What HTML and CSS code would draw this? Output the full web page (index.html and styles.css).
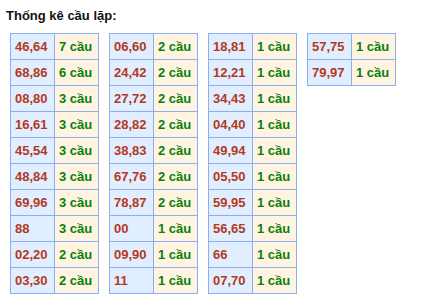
FILE: index.html
```html
<!DOCTYPE html>
<html>
<head>
<meta charset="utf-8">
<link rel="stylesheet" href="styles.css">
</head>
<body>
<div class="title">Thống kê cầu lặp:</div>
<div class="tables">
  <table class="stat">
    <tr><td class="num">46,64</td><td class="cau">7 cầu</td></tr>
    <tr><td class="num">68,86</td><td class="cau">6 cầu</td></tr>
    <tr><td class="num">08,80</td><td class="cau">3 cầu</td></tr>
    <tr><td class="num">16,61</td><td class="cau">3 cầu</td></tr>
    <tr><td class="num">45,54</td><td class="cau">3 cầu</td></tr>
    <tr><td class="num">48,84</td><td class="cau">3 cầu</td></tr>
    <tr><td class="num">69,96</td><td class="cau">3 cầu</td></tr>
    <tr><td class="num">88</td><td class="cau">3 cầu</td></tr>
    <tr><td class="num">02,20</td><td class="cau">2 cầu</td></tr>
    <tr><td class="num">03,30</td><td class="cau">2 cầu</td></tr>
  </table>
  <table class="stat">
    <tr><td class="num">06,60</td><td class="cau">2 cầu</td></tr>
    <tr><td class="num">24,42</td><td class="cau">2 cầu</td></tr>
    <tr><td class="num">27,72</td><td class="cau">2 cầu</td></tr>
    <tr><td class="num">28,82</td><td class="cau">2 cầu</td></tr>
    <tr><td class="num">38,83</td><td class="cau">2 cầu</td></tr>
    <tr><td class="num">67,76</td><td class="cau">2 cầu</td></tr>
    <tr><td class="num">78,87</td><td class="cau">2 cầu</td></tr>
    <tr><td class="num">00</td><td class="cau">1 cầu</td></tr>
    <tr><td class="num">09,90</td><td class="cau">1 cầu</td></tr>
    <tr><td class="num">11</td><td class="cau">1 cầu</td></tr>
  </table>
  <table class="stat">
    <tr><td class="num">18,81</td><td class="cau">1 cầu</td></tr>
    <tr><td class="num">12,21</td><td class="cau">1 cầu</td></tr>
    <tr><td class="num">34,43</td><td class="cau">1 cầu</td></tr>
    <tr><td class="num">04,40</td><td class="cau">1 cầu</td></tr>
    <tr><td class="num">49,94</td><td class="cau">1 cầu</td></tr>
    <tr><td class="num">05,50</td><td class="cau">1 cầu</td></tr>
    <tr><td class="num">59,95</td><td class="cau">1 cầu</td></tr>
    <tr><td class="num">56,65</td><td class="cau">1 cầu</td></tr>
    <tr><td class="num">66</td><td class="cau">1 cầu</td></tr>
    <tr><td class="num">07,70</td><td class="cau">1 cầu</td></tr>
  </table>
  <table class="stat">
    <tr><td class="num">57,75</td><td class="cau">1 cầu</td></tr>
    <tr><td class="num">79,97</td><td class="cau">1 cầu</td></tr>
  </table>
</div>
</body>
</html>
```
FILE: styles.css
```css
html, body {
  margin: 0;
  padding: 0;
  background: #ffffff;
  font-family: "Liberation Sans", Arial, sans-serif;
}
.title {
  margin: 8px 0 0 6px;
  font-size: 13px;
  line-height: 15px;
  font-weight: bold;
  color: #111111;
}
.tables {
  display: flex;
  align-items: flex-start;
  gap: 10px;
  padding: 10px 0 0 10px;
}
.stat {
  border-collapse: collapse;
  font-size: 13px;
  font-weight: bold;
}
.stat td {
  border: 1px solid #8aaef0;
  width: 35px;
  height: 25px;
  padding: 0 4px;
  text-align: left;
  white-space: nowrap;
}
.num {
  background: #e1eeff;
  color: #b3391c;
}
.cau {
  background: #fff4e2;
  color: #0a800a;
}
```
